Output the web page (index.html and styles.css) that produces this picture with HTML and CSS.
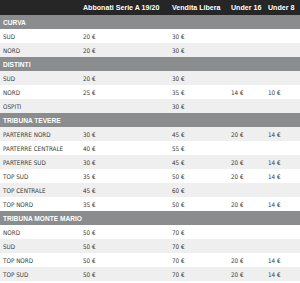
FILE: index.html
```html
<!DOCTYPE html>
<html>
<head>
<meta charset="utf-8">
<link rel="stylesheet" href="styles.css">
</head>
<body>
<table class="prices">
  <colgroup>
    <col class="c1"><col class="c2"><col class="c3"><col class="c4"><col class="c5">
  </colgroup>
  <thead>
    <tr><th></th><th>Abbonati Serie A 19/20</th><th>Vendita Libera</th><th>Under 16</th><th>Under 8</th></tr>
  </thead>
  <tbody>
    <tr class="section"><td colspan="5">CURVA</td></tr>
    <tr><td>SUD</td><td>20 €</td><td>30 €</td><td></td><td></td></tr>
    <tr><td>NORD</td><td>20 €</td><td>30 €</td><td></td><td></td></tr>
    <tr class="section"><td colspan="5">DISTINTI</td></tr>
    <tr><td>SUD</td><td>20 €</td><td>30 €</td><td></td><td></td></tr>
    <tr><td>NORD</td><td>25 €</td><td>35 €</td><td>14 €</td><td>10 €</td></tr>
    <tr><td>OSPITI</td><td></td><td>30 €</td><td></td><td></td></tr>
    <tr class="section"><td colspan="5">TRIBUNA TEVERE</td></tr>
    <tr><td>PARTERRE NORD</td><td>30 €</td><td>45 €</td><td>20 €</td><td>14 €</td></tr>
    <tr><td>PARTERRE CENTRALE</td><td>40 €</td><td>55 €</td><td></td><td></td></tr>
    <tr><td>PARTERRE SUD</td><td>30 €</td><td>45 €</td><td>20 €</td><td>14 €</td></tr>
    <tr><td>TOP SUD</td><td>35 €</td><td>50 €</td><td>20 €</td><td>14 €</td></tr>
    <tr><td>TOP CENTRALE</td><td>45 €</td><td>60 €</td><td></td><td></td></tr>
    <tr><td>TOP NORD</td><td>35 €</td><td>50 €</td><td>20 €</td><td>14 €</td></tr>
    <tr class="section"><td colspan="5">TRIBUNA MONTE MARIO</td></tr>
    <tr><td>NORD</td><td>50 €</td><td>70 €</td><td></td><td></td></tr>
    <tr><td>SUD</td><td>50 €</td><td>70 €</td><td></td><td></td></tr>
    <tr><td>TOP NORD</td><td>50 €</td><td>70 €</td><td>20 €</td><td>14 €</td></tr>
    <tr><td>TOP SUD</td><td>50 €</td><td>70 €</td><td>20 €</td><td>14 €</td></tr>
  </tbody>
</table>
</body>
</html>
```
FILE: styles.css
```css
html, body {
  margin: 0;
  padding: 0;
  background: #ffffff;
}
.prices {
  width: 300px;
  border-collapse: collapse;
  table-layout: fixed;
  font-family: "DejaVu Sans Condensed", "Liberation Sans", sans-serif;
  font-size: 6.3px;
  color: #3a3a3a;
}
.c1 { width: 80px; }
.c2 { width: 89px; }
.c3 { width: 59px; }
.c4 { width: 37px; }
.c5 { width: 35px; }
.prices th, .prices td {
  padding: 0 0 0 3px;
  text-align: left;
  white-space: nowrap;
  overflow: hidden;
}
.prices thead th {
  height: 15px;
  background: #262626;
  color: #ffffff;
  font-family: "Liberation Sans", Arial, sans-serif;
  font-size: 7.1px;
  font-weight: bold;
}
.prices tbody td {
  height: 14px;
}
.prices tbody tr:nth-child(odd) {
  background: #efefef;
}
.prices tbody tr:nth-child(even) {
  background: #ffffff;
}
.prices tbody tr.section {
  background: #8a8c8e;
}
.prices tbody tr.section td {
  color: #ffffff;
  font-family: "Liberation Sans", Arial, sans-serif;
  font-weight: bold;
  font-size: 6.6px;
}
```
